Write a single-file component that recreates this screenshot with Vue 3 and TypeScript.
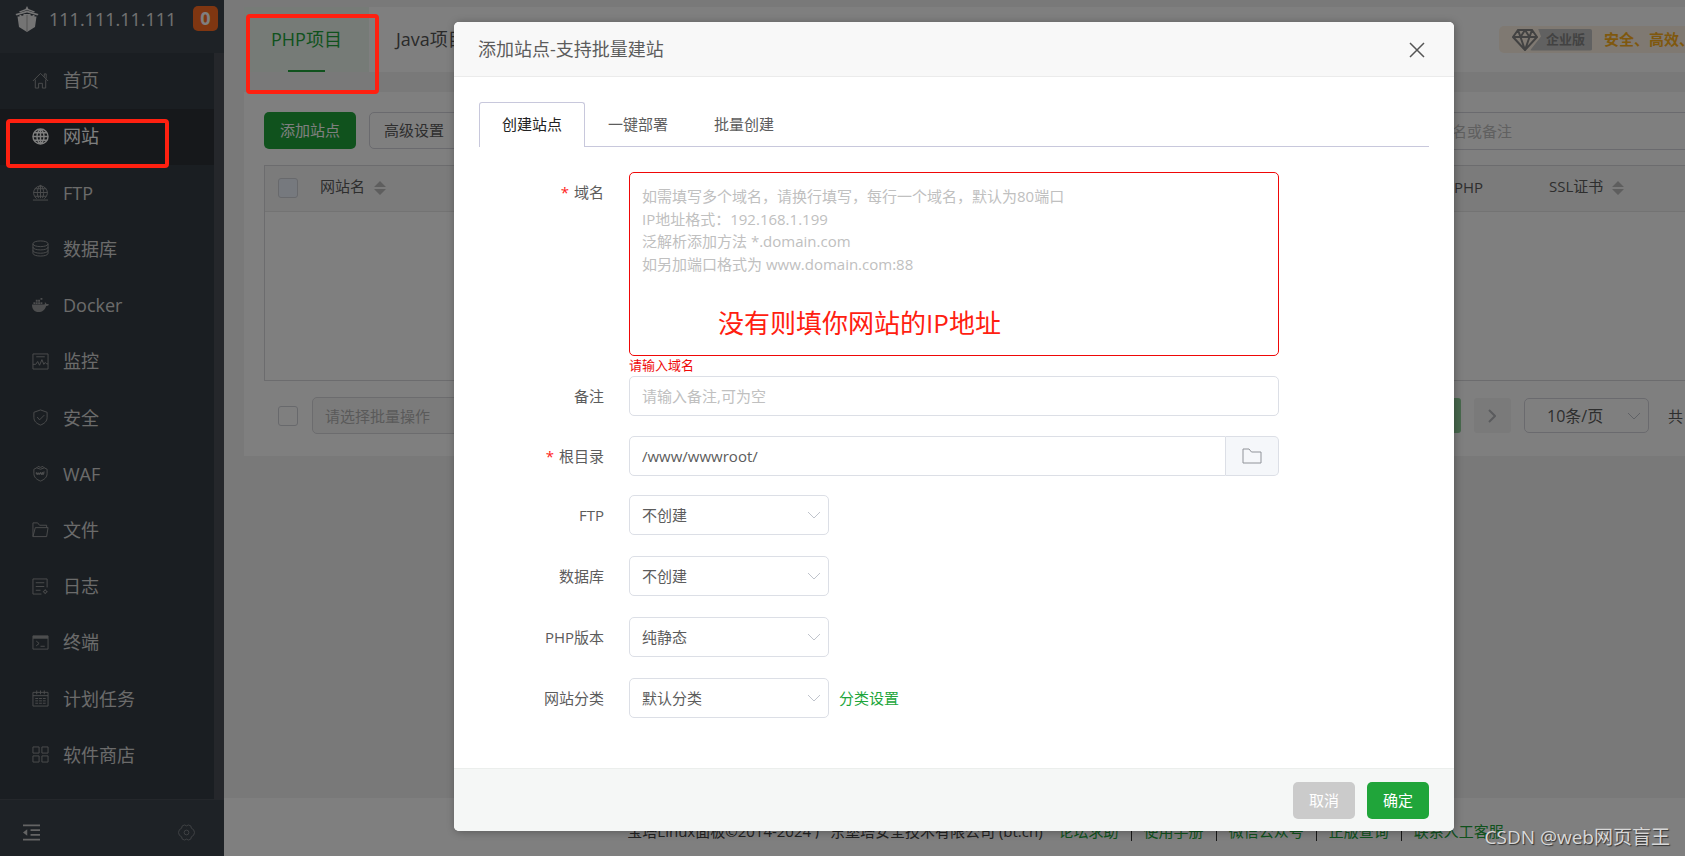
<script setup lang="ts">
import { ref } from 'vue'

interface MenuItem {
  label: string
  line?: string
  solid?: string
}

const menu: MenuItem[] = [
  { label: '首页', line: 'M1 9.5 9 1.5l8 8M3.5 8v9h3.5v-5h4v5h3.5V8M13 5V2h2v5' },
  {
    label: '网站',
    line: 'M9 1a8 8 0 1 0 0 16A8 8 0 0 0 9 1zM1 9h16M2.5 5h13M2.5 13h13M9 1v16M9 1c-5 4-5 12 0 16M9 1c5 4 5 12 0 16',
  },
  {
    label: 'FTP',
    line: 'M5 15.5A7.3 7.3 0 1 1 13 15.5M1 17h16M1.500 9h15M3 5h12M3 13h12M9 1v14M9 1C5 5 5 11 7 15M9 1c4 4 4 10 2 14',
  },
  {
    label: '数据库',
    line: 'M1 4c0-4 16-4 16 0s-16 4-16 0zv10c0 4 16 4 16 0V4M1 7.500c0 4 16 4 16 0M1 11c0 4 16 4 16 0',
  },
  {
    label: 'Docker',
    solid: 'M0 8h12.500c1 0 1.500-1 1-2.500 1 .3 1.700 1 1.800 2 1 0 2 .1 2.700.500-.4 1-1.500 1.600-3 1.600C13.500 14 11 16 7 16 2.500 16 0 13 0 8zM1.500 5.500h2v2h-2zM4 5.500h2v2H4zM6.500 5.500h2v2h-2zM9 5.500h2v2H9zM4 3h2v2H4zM6.500 3h2v2h-2zM9 1h2v2H9z',
  },
  { label: '监控', line: 'M1 1h16v16H1zM4.500 4h9M1 12h3l2-3 2 4 2.500-6 2 5 1.500-2 1.500 1.500H17' },
  { label: '安全', line: 'M9 1l7 2.500V9c0 4-3 6.500-7 8-4-1.500-7-4-7-8V3.500zM5.500 8.500l2.500 3 5-5' },
  {
    label: 'WAF',
    line: 'M2 4.500 5 3l1.500-1.500L9 2.500l2.500-1L13 3l3 1.500V9c0 4-3 6.500-7 8-4-1.500-7-4-7-8zM5 3l4 1.500L13 3M4.500 7.500l1 3 1-2.500 1 2.500L9 7.500l1 3 1-3v3M13.500 7.500H12v3M4 9h9',
  },
  { label: '文件', line: 'M1 16.500V2h5l2 2.500h7.500V7M1 16.500 3.500 7H17l-1.500 9.500z' },
  {
    label: '日志',
    line: 'M16 10V1H1v16h9M4 5h9M4 9h9M4 13h5M14 12v1M14 16v1M11.500 14.500h1M15.500 14.500h1M14 13a1.500 1.500 0 1 0 0 3 1.500 1.500 0 0 0 0-3z',
  },
  { label: '终端', line: 'M1 2h16v14H1zM4.500 7.500 7.500 10l-3 2.500M9 13h4.500', solid: 'M1 2h16v3H1z' },
  {
    label: '计划任务',
    line: 'M1 2.500h16V17H1zM1 6h16M5 .5v4M9 .5v4M13 .5v4M3.500 9h3M7.500 9h3M11.500 9h3M3.500 11.500h3M7.500 11.500h3M11.500 11.500h3M3.500 14h3M7.500 14h3M11.500 14h3',
  },
  { label: '软件商店', line: 'M1 1h6.500v6.500H1zM10.500 1H17v6.500h-6.500zM1 10.500h6.500V17H1zM10.500 10.500H17V17h-6.500z' },
]

const activeMenu = ref('网站')
const formTabs = ['创建站点', '一键部署', '批量创建']
const activeTab = ref('创建站点')

const domainHint = [
  '如需填写多个域名，请换行填写，每行一个域名，默认为80端口',
  'IP地址格式：192.168.1.199',
  '泛解析添加方法 *.domain.com',
  '如另加端口格式为 www.domain.com:88',
].join('\n')

const domains = ref('')
const remark = ref('')
const root = ref('/www/wwwroot/')

const selects = [
  { id: 'ftp', label: 'FTP', value: '不创建' },
  { id: 'database', label: '数据库', value: '不创建' },
  { id: 'php', label: 'PHP版本', value: '纯静态' },
  { id: 'category', label: '网站分类', value: '默认分类' },
]

const footerLinks = ['论坛求助', '使用手册', '微信公众号', '正版查询', '联系人工客服']
</script>

<template>
  <div class="app">
    <aside class="sidebar">
      <header class="brand">
        <svg class="logo" viewBox="0 0 24 26" aria-hidden="true">
          <path d="M12 0l1.500 3 6.500 2.500-1 1-7-2.500-7 2.500-1-1L10.500 3z" />
          <path d="M12 4.500l8 2.500 3.500 1-1 1.500L12 6.500 1.500 9.500.5 8 4 7z" />
          <path d="M2.500 10.500h2V9h2v1l2-.8V8h7v1.200l2 .8V9h2v1.500h2L20 21l-8 5-8-5z" />
          <path d="M12 9v17" class="logo-seam" />
        </svg>
        <span class="host">111.111.11.111</span>
        <span class="badge">0</span>
      </header>
      <nav class="menu">
        <a
          v-for="item in menu"
          :key="item.label"
          href="#"
          class="menu-item"
          :class="{ active: item.label === activeMenu }"
          @click.prevent="activeMenu = item.label"
        >
          <svg class="menu-icon" viewBox="0 0 18 18" aria-hidden="true">
            <path v-if="item.line" class="line" :d="item.line" />
            <path v-if="item.solid" class="solid" :d="item.solid" />
          </svg>
          <span>{{ item.label }}</span>
        </a>
      </nav>
      <div class="side-tools">
        <button type="button" aria-label="收起菜单">
          <svg class="collapse" viewBox="0 0 18 18">
            <path class="bars" d="M0 1.500h18M8 6.500h10M8 11.500h10M0 16.500h18" />
            <path class="arrow" d="M4.500 5.500v7L0 9z" />
          </svg>
        </button>
        <button type="button" aria-label="菜单设置">
          <svg class="gear" viewBox="0 0 18 18">
            <path d="M4.500 2 7 1l2 1 2-1 2.500 1 .7 2.500L16.500 6l1 3-1 3-2.300 1.500-.7 2.500-2.500 1-2-1-2 1-2.500-1-.7-2.500L1.500 12l-1-3 1-3 2.300-1.500z" />
            <circle cx="9" cy="9" r="2.500" />
          </svg>
        </button>
      </div>
    </aside>

    <main class="content">
      <div class="topbar">
        <a href="#" class="project-tab current">PHP项目</a>
        <a href="#" class="project-tab">Java项目</a>
        <div class="promo">
          <svg class="diamond" viewBox="0 0 26 22" aria-hidden="true">
            <path d="M6 1h14l5 7-12 13L1 8zM1 8h24M6 1l2.500 7L13 21l4.500-13L20 1M8.500 8 13 1l4.500 7" />
          </svg>
          <span class="edition">企业版</span>
          <strong class="slogan">安全、高效、</strong>
        </div>
      </div>

      <section class="panel">
        <div class="toolbar">
          <button type="button" class="btn primary">添加站点</button>
          <button type="button" class="btn plain">高级设置</button>
          <input class="search" type="text" placeholder="请输入域名或备注" aria-label="搜索网站" />
        </div>

        <div class="table-box">
          <table class="sites">
            <thead>
              <tr>
                <th class="col-check"><input type="checkbox" class="check tinted" aria-label="全选" /></th>
                <th>
                  网站名
                  <svg class="sort" viewBox="0 0 12 16"><path d="M6 1l6 6H0zM0 9h12l-6 6z" /></svg>
                </th>
                <th class="col-php">PHP</th>
                <th class="col-ssl">
                  SSL证书
                  <svg class="sort" viewBox="0 0 12 16"><path d="M6 1l6 6H0zM0 9h12l-6 6z" /></svg>
                </th>
              </tr>
            </thead>
          </table>
        </div>

        <div class="batch">
          <input type="checkbox" class="check" aria-label="选择全部网站" />
          <div class="select-wrap batch-select">
            <select aria-label="批量操作" disabled><option>请选择批量操作</option></select>
            <svg class="chevron" viewBox="0 0 14 8"><path d="M1 1l6 6 6-6" /></svg>
          </div>
          <div class="pager">
            <button type="button" class="page-btn page-current">1</button>
            <button type="button" class="page-btn" aria-label="下一页">
              <svg class="next" viewBox="0 0 8 14"><path d="M1 1l6 6-6 6" /></svg>
            </button>
            <div class="select-wrap page-size">
              <select aria-label="每页条数"><option>10条/页</option></select>
              <svg class="chevron" viewBox="0 0 14 8"><path d="M1 1l6 6 6-6" /></svg>
            </div>
            <span>共</span>
          </div>
        </div>
      </section>

      <footer class="page-footer">
        <span>宝塔Linux面板©2014-2024 广东堡塔安全技术有限公司 (bt.cn)</span>
        <span class="footer-links">
          <a v-for="link in footerLinks" :key="link" href="#">{{ link }}</a>
        </span>
      </footer>
    </main>

    <div class="overlay">
      <section class="dialog" role="dialog" aria-labelledby="dialog-title">
        <header class="dialog-head">
          <h2 id="dialog-title">添加站点-支持批量建站</h2>
          <button type="button" class="close" aria-label="关闭">
            <svg viewBox="0 0 16 16"><path d="M1 1l14 14M15 1L1 15" /></svg>
          </button>
        </header>

        <div class="dialog-body">
          <div class="form-tabs" role="tablist">
            <button
              v-for="tab in formTabs"
              :key="tab"
              type="button"
              role="tab"
              class="form-tab"
              :class="{ selected: tab === activeTab }"
              @click="activeTab = tab"
            >
              {{ tab }}
            </button>
          </div>

          <form class="form" @submit.prevent>
            <div class="row">
              <label for="domain" class="required">域名</label>
              <div class="field domain-field">
                <textarea id="domain" v-model="domains" :placeholder="domainHint"></textarea>
                <p class="note">没有则填你网站的IP地址</p>
                <p class="error">请输入域名</p>
              </div>
            </div>
            <div class="row">
              <label for="remark">备注</label>
              <div class="field">
                <input id="remark" v-model="remark" type="text" placeholder="请输入备注,可为空" />
              </div>
            </div>
            <div class="row spaced">
              <label for="root" class="required">根目录</label>
              <div class="field joined">
                <input id="root" v-model="root" type="text" />
                <button type="button" class="append" aria-label="选择目录">
                  <svg viewBox="0 0 20 16"><path d="M1 1h6l2.500 3H19v11H1z" /></svg>
                </button>
              </div>
            </div>
            <div class="select-rows">
              <div v-for="item in selects" :key="item.id" class="row">
                <label :for="item.id">{{ item.label }}</label>
                <div class="select-wrap">
                  <select :id="item.id"><option>{{ item.value }}</option></select>
                  <svg class="chevron" viewBox="0 0 14 8"><path d="M1 1l6 6 6-6" /></svg>
                </div>
                <a v-if="item.id === 'category'" href="#" class="set-link">分类设置</a>
              </div>
            </div>
          </form>
        </div>

        <footer class="dialog-foot">
          <button type="button" class="btn cancel">取消</button>
          <button type="button" class="btn confirm">确定</button>
        </footer>
      </section>
    </div>

    <div class="mark mark-tab"></div>
    <div class="mark mark-menu"></div>
    <div class="watermark">CSDN @web网页盲王</div>
  </div>
</template>

<style>
body {
  margin: 0;
}
</style>

<style scoped>
.app,
.app *,
.app *::before {
  box-sizing: border-box;
}
.app {
  position: relative;
  display: flex;
  height: 100vh;
  overflow: hidden;
  background: #f2f2f2;
  color: #5c5c5c;
  font-family: 'Open Sans', 'Noto Sans CJK SC', sans-serif;
  font-size: 15px;
  line-height: 20px;
}
button,
input,
select,
textarea {
  font: inherit;
  color: inherit;
  margin: 0;
}
button {
  padding: 0;
  border: 0;
  background: none;
  white-space: nowrap;
}
a {
  text-decoration: none;
}
svg {
  display: block;
  flex: none;
}

/* sidebar */
.sidebar {
  flex: none;
  display: flex;
  flex-direction: column;
  width: 224px;
  background: #3c444d;
}
.brand {
  display: flex;
  align-items: center;
  height: 53px;
  padding: 0 6px 16px 15px;
  color: #e4e4e4;
}
.logo {
  width: 24px;
  height: 26px;
  fill: #e8e8e8;
}
.logo-seam {
  stroke: #aaa;
}
.host {
  flex: 1;
  margin-left: 10px;
  font-size: 18px;
}
.badge {
  width: 25px;
  height: 25px;
  border-radius: 5px;
  background: #ff6c22;
  color: #fff;
  font-size: 18px;
  font-weight: 700;
  line-height: 24px;
  text-align: center;
}
.menu {
  flex: 1;
  display: flex;
  flex-direction: column;
  padding-bottom: 15px;
  border-right: 10px solid #4a4f57;
  background: #353d44;
}
.menu-item {
  flex: 1;
  display: flex;
  align-items: center;
  gap: 14px;
  padding: 0 0 2px 32px;
  color: #d6d6d6;
  font-size: 18px;
}
.menu-item.active {
  background: #2c3036;
  color: #fff;
}
.menu-icon {
  width: 17px;
  height: 17px;
  color: #989a9c;
}
.active .menu-icon {
  color: #fff;
}
.active .line {
  stroke-width: 1.5;
}
.line {
  fill: none;
  stroke: currentColor;
}
.solid {
  fill: currentColor;
}
.side-tools {
  display: flex;
  justify-content: space-between;
  align-items: center;
  height: 57px;
  padding: 8px 29px 0 23px;
  border-top: 1px solid #484e56;
}
.side-tools svg {
  width: 17px;
  height: 17px;
}
.bars {
  stroke: #c8c8c8;
  stroke-width: 2;
}
.arrow {
  fill: #c8c8c8;
}
.gear {
  fill: none;
  stroke: #82868a;
  stroke-width: 1;
}

/* main area */
.content {
  flex: 1;
  min-width: 0;
  display: flex;
  flex-direction: column;
  padding-top: 7px;
}
.topbar {
  display: flex;
  align-items: center;
  height: 65px;
  margin-left: 20px;
  background: #fff;
}
.project-tab {
  position: relative;
  display: flex;
  align-items: center;
  height: 65px;
  padding: 0 27px 2px;
  color: #555;
  font-size: 18px;
}
.project-tab.current {
  background: #ecf6ee;
  color: #20a53a;
}
.current::before {
  content: '';
  position: absolute;
  left: 44px;
  bottom: 0;
  width: 37px;
  height: 2px;
  background: #20a53a;
}
.promo {
  display: flex;
  align-items: center;
  width: 186px;
  height: 27px;
  margin-left: auto;
  padding-left: 13px;
  border-radius: 5px 0 0 5px;
  background: #fff3e4;
  white-space: nowrap;
}
.diamond {
  width: 26px;
  height: 22px;
  fill: none;
  stroke: #858585;
  stroke-width: 2;
}
.edition {
  flex: none;
  width: 62px;
  height: 22px;
  margin-left: -8px;
  padding-left: 16px;
  border-radius: 2px;
  clip-path: polygon(8px 0, 100% 0, 100% 100%, 0 100%, 11px 8px);
  background: #c2c2c2;
  color: #858585;
  font-size: 13px;
  font-weight: 700;
  line-height: 20px;
}
.slogan {
  margin-left: 12px;
  padding-bottom: 2px;
  color: #ffb01c;
}
.panel {
  margin: 20px 0 auto 20px;
  padding: 20px 0 22px 20px;
  background: #fff;
}
.toolbar {
  display: flex;
  gap: 13px;
}
.btn {
  height: 37px;
  padding-bottom: 2px;
  border-radius: 5px;
}
.primary {
  padding: 0 16px 2px;
  background: #20a53a;
  color: #fff;
}
.plain {
  padding: 0 14px 2px;
  border: 1px solid #d4d4dc;
}
.search {
  width: 306px;
  height: 38px;
  margin-left: auto;
  padding: 0 12px;
  border: 1px solid #d4d4dc;
  border-right: 0;
  border-radius: 5px 0 0 5px;
}
::placeholder {
  color: #c0c0c0;
  opacity: 1;
}
.table-box {
  height: 216px;
  margin-top: 15px;
  border: 1px solid #d8d8dc;
  border-right: 0;
}
.sites {
  width: 100%;
  border-collapse: collapse;
  table-layout: fixed;
  background: #f7f7f7;
}
.sites th {
  height: 45px;
  padding: 0 0 4px 15px;
  border-bottom: 1px solid #e6e6e6;
  font-weight: 400;
  text-align: left;
}
.sites .col-check {
  width: 40px;
  padding: 0 0 0 13px;
}
.sites .col-php {
  width: 95px;
  padding-bottom: 2px;
}
.col-ssl {
  width: 151px;
}
.sort {
  display: inline-block;
  width: 12px;
  height: 16px;
  margin-left: 5px;
  fill: #bdbdbd;
  vertical-align: middle;
}
.check {
  display: block;
  width: 20px;
  height: 20px;
  appearance: none;
  border: 1px solid #d0d2d8;
  border-radius: 3px;
  background: #fff;
}
.tinted {
  background: #edf2fc;
}
.batch {
  display: flex;
  align-items: center;
  margin-top: 16px;
  padding-left: 14px;
}
.select-wrap {
  position: relative;
  width: 200px;
}
.select-wrap select {
  display: block;
  width: 100%;
  height: 40px;
  padding: 0 34px 0 12px;
  appearance: none;
  border: 1px solid #dcdfe6;
  border-radius: 5px;
  background: #fff;
  opacity: 1;
}
.chevron {
  position: absolute;
  top: 50%;
  right: 8px;
  width: 14px;
  height: 8px;
  margin-top: -4px;
  fill: none;
  stroke: #c0c4cc;
  pointer-events: none;
}
.batch-select {
  margin-left: 14px;
}
.batch-select select {
  height: 37px;
  background: #f7f7f7;
  border-color: #d8d8dc;
  color: #b4b4b4;
}
.pager {
  display: flex;
  align-items: center;
  gap: 13px;
  margin-left: auto;
  padding-right: 2px;
}
.page-btn {
  display: flex;
  align-items: center;
  justify-content: center;
  width: 37px;
  height: 35px;
  border-radius: 3px;
  background: #f4f4f5;
}
.page-current {
  background: #90d29d;
  color: #fff;
}
.next {
  width: 8px;
  height: 14px;
  fill: none;
  stroke: #b4b6bb;
  stroke-width: 2;
}
.page-size {
  width: 125px;
  margin-right: 6px;
}
.page-size select {
  height: 35px;
  padding: 0 34px 0 22px;
  border-color: #d4d4dc;
  font-size: 16px;
}
.page-footer {
  display: flex;
  justify-content: center;
  align-items: center;
  gap: 16px;
  height: 58px;
  padding: 8px 0 0 222px;
  background: #fff;
  color: #444;
  white-space: nowrap;
}
.footer-links {
  display: flex;
}
.footer-links a {
  color: #20a53a;
}
.footer-links a + a::before {
  content: '';
  display: inline-block;
  width: 1px;
  height: 17px;
  margin: 0 12px;
  background: #333;
  vertical-align: middle;
}

/* dialog */
.overlay {
  position: absolute;
  inset: 0;
  padding: 22px 0 0 454px;
  background: rgba(0, 0, 0, 0.5);
}
.dialog {
  width: 1000px;
  border-radius: 5px;
  overflow: hidden;
  background: #fff;
  box-shadow: 1px 1px 8px rgba(0, 0, 0, 0.3);
}
.dialog-head {
  display: flex;
  align-items: center;
  justify-content: space-between;
  height: 55px;
  padding: 0 29px 0 24px;
  border-bottom: 1px solid #ebebeb;
  background: #f8f8f8;
}
.dialog-head h2 {
  margin: 0;
  font-size: 18px;
  font-weight: 400;
}
.close {
  padding-top: 2px;
}
.close svg {
  width: 16px;
  height: 16px;
  stroke: #555;
  stroke-width: 1.5;
}
.dialog-body {
  padding: 25px 25px 50px;
}
.form-tabs {
  display: flex;
  border-bottom: 1px solid #c8c8dc;
}
.form-tab {
  height: 44px;
  padding: 0 23px;
}
.form-tab.selected {
  height: 45px;
  margin-bottom: -1px;
  padding: 0 22px 2px;
  border: 1px solid #c8c8dc;
  border-bottom: 0;
  border-radius: 3px 3px 0 0;
  background: #fff;
  color: #222;
}
.form {
  padding-top: 25px;
}
.row {
  display: flex;
}
.row > label {
  width: 125px;
  margin-right: 25px;
  line-height: 40px;
  text-align: right;
}
.required::before {
  content: '*';
  margin-right: 5px;
  color: #f22;
}
.field {
  position: relative;
  width: 650px;
}
.field input,
.field textarea {
  display: block;
  width: 100%;
  height: 40px;
  padding: 0 12px;
  border: 1px solid #dcdfe6;
  border-radius: 5px;
  background: #fff;
}
.field textarea {
  height: 184px;
  padding: 12px;
  border-color: #ef0808;
  line-height: 1.5;
  resize: none;
}
.note {
  position: absolute;
  left: 89px;
  top: 133px;
  margin: 0;
  color: #ff2010;
  font-size: 26px;
  line-height: 36px;
}
.error {
  height: 20px;
  margin: 0;
  color: #ef0808;
  font-size: 13px;
  line-height: 18px;
}
.spaced {
  margin-top: 20px;
}
.joined {
  display: flex;
}
.joined input {
  flex: 1;
  width: auto;
  border-radius: 5px 0 0 5px;
}
.append {
  display: flex;
  align-items: center;
  justify-content: center;
  width: 53px;
  border: 1px solid #dcdfe6;
  border-left: 0;
  border-radius: 0 5px 5px 0;
  background: #f5f7fa;
}
.append svg {
  width: 20px;
  height: 16px;
  fill: none;
  stroke: #909399;
}
.select-rows {
  display: grid;
  gap: 21px;
  margin-top: 19px;
}
.set-link {
  margin-left: 10px;
  color: #20a53a;
  line-height: 40px;
}
.dialog-foot {
  display: flex;
  justify-content: flex-end;
  gap: 12px;
  padding: 13px 25px 12px;
  border-top: 1px solid #ebeeec;
  background: #f5f7f6;
}
.dialog-foot .btn {
  width: 62px;
  color: #fff;
}
.cancel {
  background: #cbcbcb;
}
.confirm {
  background: #20a53a;
}

/* annotations */
.mark {
  position: absolute;
  border: 4px solid #ff2010;
  border-radius: 4px;
  pointer-events: none;
}
.mark-tab {
  left: 246px;
  top: 14px;
  width: 133px;
  height: 80px;
}
.mark-menu {
  left: 6px;
  top: 119px;
  width: 163px;
  height: 49px;
}
.watermark {
  position: absolute;
  right: 15px;
  bottom: 5px;
  color: #d8d8d8;
  font-size: 19px;
  line-height: 28px;
  text-shadow: 1px 1px 1px #333;
}
</style>
